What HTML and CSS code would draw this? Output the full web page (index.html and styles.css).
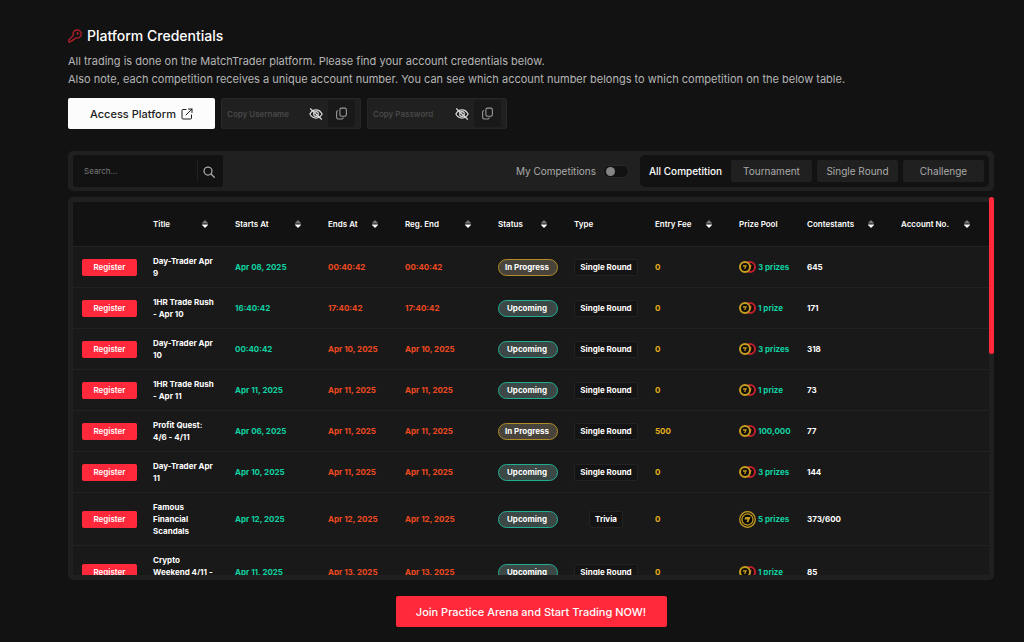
FILE: index.html
```html
<!DOCTYPE html>
<html lang="en">
<head>
  <meta charset="UTF-8" />
  <meta name="viewport" content="width=device-width, initial-scale=1.0"/>
  <title>Competitions</title>
  <link rel="stylesheet" href="styles.css">
</head>
<body>

  <!-- Shared icons -->
  <svg class="sprite" aria-hidden="true">
    <symbol id="eye-off" viewBox="0 0 24 24">
      <g fill="none" stroke="currentColor" stroke-width="2" stroke-linecap="round">
        <path d="M1.500 12C4 7.500 8 5 12 5S20 7.500 22.500 12C20 16.500 16 19 12 19S4 16.500 1.500 12Z"/>
        <circle cx="12" cy="12" r="4"/>
        <path d="M2.500 3l19 18"/>
      </g>
    </symbol>
    <symbol id="copy" viewBox="0 0 24 24">
      <g fill="none" stroke="currentColor" stroke-width="2" stroke-linejoin="round" stroke-linecap="round">
        <rect x="9" y="2" width="12" height="15" rx="3"/>
        <path d="M5 7a2 2 0 0 0-2 2v10a3 3 0 0 0 3 3h7a2 2 0 0 0 2-2"/>
      </g>
    </symbol>
    <symbol id="sort" viewBox="0 0 6 8">
      <path d="M3 0L6 3V3.500H0V3Z" fill="#777"/>
      <path d="M0 4.500H6V5L3 8L0 5Z" fill="#fff"/>
    </symbol>
    <symbol id="coin" viewBox="0 0 24 24">
      <circle cx="12" cy="12" r="10" fill="#100e08" stroke="currentColor" stroke-width="4"/>
      <path d="M8 8.500h8l-3.500 7.500h-2.500l2-4.500H8z" fill="currentColor"/>
    </symbol>
    <symbol id="coin-big" viewBox="0 0 24 24">
      <circle cx="12" cy="12" r="11" fill="#151310" stroke="currentColor" stroke-width="1.800"/>
      <circle cx="12" cy="12" r="7.800" fill="#050505" stroke="currentColor" stroke-width="1.800"/>
      <path d="M9 8.500h7.500l-3.500 7.500h-2.500l1.500-4H7.500z" fill="currentColor"/>
    </symbol>
  </svg>

  <main class="page">
    <h1 class="title">
      <svg class="key" viewBox="0 0 24 24" fill="none" stroke="currentColor" stroke-width="2" stroke-linejoin="round" stroke-linecap="round">
        <path d="M15.500 1.500a7 7 0 1 1-2.200 13.600L11 17.500H8.500V20H6l-2.500 2.500H1.500V18.500L9 10.800A7 7 0 0 1 15.500 1.500Z"/>
        <circle cx="16.500" cy="7.500" r="1"/>
      </svg>
      Platform Credentials
    </h1>
    <p class="intro">All trading is done on the MatchTrader platform. Please find your account credentials below.<br>
      Also note, each competition receives a unique account number. You can see which account number belongs to which competition on the below table.</p>

    <div class="credentials">
      <a class="access-btn" href="#">Access Platform
        <svg viewBox="0 0 24 24" fill="none" stroke="currentColor" stroke-width="2" stroke-linecap="round" stroke-linejoin="round">
          <path d="M10 3H4a2 2 0 0 0-2 2v15a2 2 0 0 0 2 2h15a2 2 0 0 0 2-2v-6M15 2h7v7M22 2L10 14"/>
        </svg>
      </a>
      <div class="copy-box">
        <input type="text" placeholder="Copy Username" aria-label="Username">
        <button class="eye-btn" aria-label="Show username"><svg><use href="#eye-off"/></svg></button>
        <button class="copy-btn" aria-label="Copy username"><svg><use href="#copy"/></svg></button>
      </div>
      <div class="copy-box">
        <input type="text" placeholder="Copy Password" aria-label="Password">
        <button class="eye-btn" aria-label="Show password"><svg><use href="#eye-off"/></svg></button>
        <button class="copy-btn" aria-label="Copy password"><svg><use href="#copy"/></svg></button>
      </div>
    </div>

    <div class="toolbar">
      <div class="search">
        <input type="text" placeholder="Search..." aria-label="Search">
        <button aria-label="Search">
          <svg viewBox="0 0 24 24" fill="none" stroke="currentColor" stroke-width="2.500" stroke-linecap="round"><circle cx="10" cy="10" r="8"/><path d="M16 16l6.500 6.500"/></svg>
        </button>
      </div>
      <label class="mine">My Competitions <input type="checkbox"></label>
      <div class="tabs">
        <button class="tab active">All Competition</button>
        <button class="tab">Tournament</button>
        <button class="tab">Single Round</button>
        <button class="tab">Challenge</button>
      </div>
    </div>

    <div class="table-box">
      <div class="table-scroll">
        <table>
          <colgroup>
            <col class="c-action"><col class="c-title"><col class="c-start"><col class="c-end"><col class="c-reg">
            <col class="c-status"><col class="c-type"><col class="c-fee"><col class="c-prize"><col class="c-contest"><col class="c-account">
          </colgroup>
          <thead>
            <tr>
              <th></th>
              <th><span>Title <svg><use href="#sort"/></svg></span></th>
              <th><span>Starts At <svg><use href="#sort"/></svg></span></th>
              <th><span>Ends At <svg><use href="#sort"/></svg></span></th>
              <th><span>Reg. End <svg><use href="#sort"/></svg></span></th>
              <th><span>Status <svg><use href="#sort"/></svg></span></th>
              <th>Type</th>
              <th><span>Entry Fee <svg><use href="#sort"/></svg></span></th>
              <th>Prize Pool</th>
              <th><span>Contestants <svg><use href="#sort"/></svg></span></th>
              <th><span>Account No. <svg><use href="#sort"/></svg></span></th>
            </tr>
          </thead>
          <tbody id="rows"></tbody>
        </table>
      </div>
      <div class="scroll-thumb"></div>
    </div>

    <button class="join-btn">Join Practice Arena and Start Trading NOW!</button>
  </main>

<script>
  const competitions = [
    { title: "Day-Trader Apr 9", start: "Apr 08, 2025", end: "00:40:42", status: "In Progress", type: "Single Round", fee: "0", prize: "3 prizes", players: "645" },
    { title: "1HR Trade Rush - Apr 10", start: "16:40:42", end: "17:40:42", status: "Upcoming", type: "Single Round", fee: "0", prize: "1 prize", players: "171" },
    { title: "Day-Trader Apr 10", start: "00:40:42", end: "Apr 10, 2025", status: "Upcoming", type: "Single Round", fee: "0", prize: "3 prizes", players: "318" },
    { title: "1HR Trade Rush - Apr 11", start: "Apr 11, 2025", end: "Apr 11, 2025", status: "Upcoming", type: "Single Round", fee: "0", prize: "1 prize", players: "73" },
    { title: "Profit Quest: 4/6 - 4/11", start: "Apr 06, 2025", end: "Apr 11, 2025", status: "In Progress", type: "Single Round", fee: "500", prize: "100,000", players: "77" },
    { title: "Day-Trader Apr 11", start: "Apr 10, 2025", end: "Apr 11, 2025", status: "Upcoming", type: "Single Round", fee: "0", prize: "3 prizes", players: "144" },
    { title: "Famous Financial Scandals", start: "Apr 12, 2025", end: "Apr 12, 2025", status: "Upcoming", type: "Trivia", fee: "0", prize: "5 prizes", players: "373/600" },
    { title: "Crypto Weekend 4/11 - 4/13", start: "Apr 11, 2025", end: "Apr 13, 2025", status: "Upcoming", type: "Single Round", fee: "0", prize: "1 prize", players: "85" }
  ];

  function coins(type) {
    if (type === "Trivia") {
      return `<svg class="coin big"><use href="#coin-big"/></svg>`;
    }
    return `<svg class="coin"><use href="#coin"/></svg><svg class="coin red"><use href="#coin"/></svg>`;
  }

  document.getElementById("rows").innerHTML = competitions.map(item => `
    <tr>
      <td><button class="register-btn">Register</button></td>
      <td class="name">${item.title}</td>
      <td class="green">${item.start}</td>
      <td class="orange">${item.end}</td>
      <td class="orange">${item.end}</td>
      <td><span class="status ${item.status === "Upcoming" ? "upcoming" : "progress"}">${item.status}</span></td>
      <td><div class="type-cell"><span class="type">${item.type}</span></div></td>
      <td class="yellow">${item.fee}</td>
      <td class="green"><div class="prize"><span class="coins">${coins(item.type)}</span>${item.prize}</div></td>
      <td>${item.players}</td>
      <td></td>
    </tr>
  `).join("");
</script>

</body>
</html>
```
FILE: styles.css
```css
* {
  box-sizing: border-box;
}

body {
  margin: 0;
  background: #121212;
  color: #fff;
  font-family: Inter, sans-serif;
  font-size: 11px;
}

button, input {
  font-family: inherit;
  border: none;
  outline: none;
}

button {
  padding: 0;
  cursor: pointer;
}

.sprite {
  display: block;
  width: 0;
  height: 0;
}

.page {
  padding: 27px 30px 15px 68px;
  display: flex;
  flex-direction: column;
}

.title {
  display: flex;
  align-items: center;
  gap: 5px;
  margin: 0 0 7px;
  font-size: 14px;
  line-height: 18px;
  font-weight: 500;
}

.key {
  width: 14px;
  height: 14px;
  color: #c3202e;
}

.intro {
  margin: 0 0 10px;
  line-height: 18px;
  color: #b5b5b5;
}

.credentials {
  display: flex;
  gap: 6px;
  margin-bottom: 22px;
}

.access-btn {
  display: flex;
  align-items: center;
  justify-content: center;
  gap: 5px;
  width: 147px;
  height: 31px;
  border-radius: 2px;
  background: #fcfcfc;
  color: #1a1a1a;
  font-weight: 500;
  text-decoration: none;
}

.access-btn svg {
  width: 12px;
  height: 12px;
}

.copy-box {
  display: flex;
  align-items: center;
  width: 140px;
  height: 31px;
  padding: 0 5px;
  border: 1px solid #262626;
  border-radius: 2px;
  background: #202020;
}

.copy-box input {
  flex: 1;
  min-width: 0;
  padding: 0;
  background: none;
  color: #fff;
  font-size: 8px;
  font-weight: 600;
}

.copy-box input::placeholder {
  color: #484848;
}

.eye-btn, .copy-btn {
  display: flex;
  align-items: center;
  justify-content: center;
  background: none;
  color: #ddd;
}

.eye-btn {
  width: 24px;
}

.eye-btn svg {
  width: 14px;
  height: 14px;
}

.copy-btn {
  width: 27px;
  height: 27px;
  border-radius: 3px;
  background: #191919;
  color: #999;
}

.copy-btn svg {
  width: 13px;
  height: 13px;
}

.toolbar {
  display: flex;
  align-items: center;
  height: 40px;
  padding: 0 5px;
  margin-bottom: 6px;
  border-radius: 5px;
  background: #202020;
}

.search {
  display: flex;
  align-items: center;
  width: 150px;
  height: 32px;
  padding-right: 3px;
  border-radius: 3px;
  background: #121212;
}

.search input {
  flex: 1;
  min-width: 0;
  height: 22px;
  padding: 0 0 0 11px;
  border-right: 1px solid #202020;
  background: none;
  color: #fff;
  font-size: 8px;
}

.search input::placeholder {
  color: #777;
}

.search button {
  width: 22px;
  height: 22px;
  background: none;
  color: #aaa;
}

.search svg {
  width: 12px;
  height: 12px;
  vertical-align: middle;
}

.mine {
  display: flex;
  align-items: center;
  gap: 7px;
  margin: 0 11px 0 auto;
  color: #aaa;
  font-size: 10px;
}

.mine input {
  appearance: none;
  width: 26px;
  height: 13px;
  margin: 0;
  padding: 1px 2px;
  border: 1px solid #292929;
  border-radius: 7px;
  background: #121212;
}

.mine input::before {
  content: "";
  display: block;
  width: 9px;
  height: 9px;
  border-radius: 50%;
  background: #858585;
}

.mine input:checked::before {
  margin-left: auto;
}

.tabs {
  display: flex;
  align-items: center;
  gap: 5px;
  height: 32px;
  padding: 0 5px;
  border-radius: 5px;
  background: #121212;
}

.tab {
  width: 81px;
  height: 22px;
  border-radius: 2px;
  background: #202020;
  color: #aaa;
  font-size: 10px;
}

.tab.active {
  background: none;
  color: #fff;
  font-weight: 500;
}

.table-box {
  position: relative;
  padding: 5px;
  margin-bottom: 16px;
  border-radius: 5px;
  background: #202020;
}

.table-scroll {
  height: 373px;
  overflow: hidden;
}

.scroll-thumb {
  position: absolute;
  top: 0;
  right: 0;
  width: 5px;
  height: 157px;
  border-radius: 3px;
  background: #ff293b;
}

table {
  width: 100%;
  table-layout: fixed;
  border-collapse: separate;
  border-spacing: 0;
  background: #191919;
  font-size: 8px;
  line-height: 12px;
}

.c-action { width: 72px; }
.c-title { width: 82px; }
.c-start { width: 93px; }
.c-end { width: 77px; }
.c-reg { width: 93px; }
.c-status { width: 76px; }
.c-type { width: 81px; }
.c-fee { width: 84px; }
.c-prize { width: 68px; }
.c-contest { width: 94px; }

th, td {
  padding: 8px;
  text-align: left;
  font-weight: 700;
  border-bottom: 1px solid #222;
}

td:first-child {
  padding-left: 9px;
}

td.name {
  padding-right: 12px;
}

th {
  height: 45px;
  background: #121212;
  font-weight: 600;
  white-space: nowrap;
}

th span {
  display: flex;
  align-items: center;
  justify-content: space-between;
}

th svg {
  width: 6px;
  height: 8px;
  margin-right: 11px;
}

.register-btn {
  display: block;
  width: 55px;
  height: 17px;
  border-radius: 2px;
  background: #ff293b;
  color: #fff;
  font-size: 8px;
  font-weight: 600;
}

.green { color: #0fd3a3; }
.orange { color: #f04a20; }
.yellow { color: #e5af1c; }

.status {
  display: block;
  width: 60px;
  padding-right: 2px;
  border: 1px solid;
  border-radius: 9px;
  line-height: 15px;
  text-align: center;
}

.status.progress {
  border-color: #b18d25;
  background: #48443b;
}

.status.upcoming {
  border-color: #1fae91;
  background: #3c4846;
}

.type-cell {
  width: 64px;
  text-align: center;
}

.type {
  display: inline-block;
  padding: 0 5px;
  border: 1px solid #222;
  border-radius: 2px;
  background: #141414;
  line-height: 15px;
  white-space: nowrap;
}

.prize {
  display: flex;
  align-items: center;
  gap: 2px;
  white-space: nowrap;
}

.coins {
  display: flex;
  align-items: center;
}

.coin {
  position: relative;
  z-index: 1;
  width: 12px;
  height: 12px;
  color: #c79d1f;
}

.coin.red {
  z-index: 0;
  margin-left: -7px;
  color: #c3202e;
}

.coin.big {
  width: 17px;
  height: 17px;
}

.join-btn {
  align-self: center;
  width: 271px;
  height: 31px;
  border-radius: 2px;
  background: #ff293b;
  color: #fff;
  font-size: 11px;
  font-weight: 500;
}
```
